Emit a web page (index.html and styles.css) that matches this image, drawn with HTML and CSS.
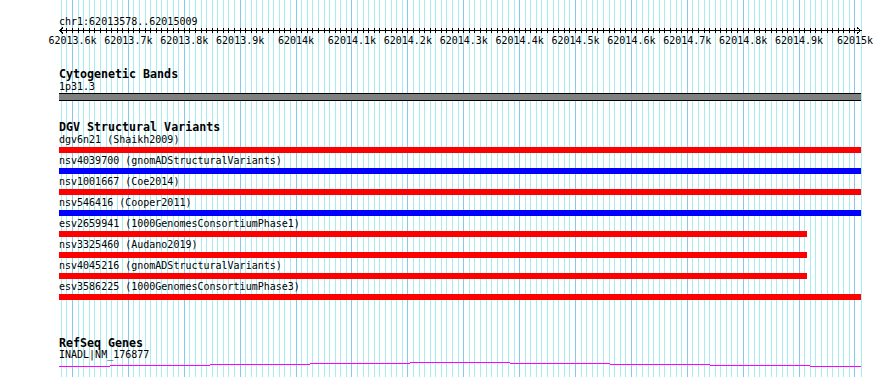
FILE: index.html
```html
<!DOCTYPE html>
<html lang="en">
<head>
  <meta charset="UTF-8" />
  <meta name="viewport" content="width=device-width, initial-scale=1.0" />
  <title>chr1:62013578..62015009</title>
  <link rel="stylesheet" href="styles.css">
</head>
<body>
  <div class="browser">
    <!-- grid lines are drawn by script.js -->
    <svg class="grid" id="grid" width="890" height="377"></svg>

    <div class="panel">
      <div class="ruler">
        <div class="locus">chr1:62013578..62015009</div>
        <svg class="axis" id="axis" width="810" height="8"></svg>
        <div class="tick-labels" id="tick-labels"></div>
      </div>

      <div class="track cyto">
        <div class="track-title">Cytogenetic Bands</div>
        <div class="label">1p31.3</div>
        <div class="band"></div>
      </div>

      <div class="track dgv">
        <div class="track-title">DGV Structural Variants</div>
        <div class="feature">
          <div class="label">dgv6n21 (Shaikh2009)</div>
          <div class="bar loss"></div>
        </div>
        <div class="feature">
          <div class="label">nsv4039700 (gnomADStructuralVariants)</div>
          <div class="bar gain"></div>
        </div>
        <div class="feature">
          <div class="label">nsv1001667 (Coe2014)</div>
          <div class="bar loss"></div>
        </div>
        <div class="feature">
          <div class="label">nsv546416 (Cooper2011)</div>
          <div class="bar gain"></div>
        </div>
        <div class="feature">
          <div class="label">esv2659941 (1000GenomesConsortiumPhase1)</div>
          <div class="bar loss" style="width: 748px"></div>
        </div>
        <div class="feature">
          <div class="label">nsv3325460 (Audano2019)</div>
          <div class="bar loss" style="width: 748px"></div>
        </div>
        <div class="feature">
          <div class="label">nsv4045216 (gnomADStructuralVariants)</div>
          <div class="bar loss" style="width: 748px"></div>
        </div>
        <div class="feature">
          <div class="label">esv3586225 (1000GenomesConsortiumPhase3)</div>
          <div class="bar loss"></div>
        </div>
      </div>

      <div class="track refseq">
        <div class="track-title">RefSeq Genes</div>
        <div class="label gene-name">INADL|NM_176877</div>
        <svg class="gene" width="802" height="10">
          <rect x="0" y="6" width="51" height="1" />
          <rect x="51" y="5" width="100" height="1" />
          <rect x="151" y="4" width="100" height="1" />
          <rect x="251" y="3" width="100" height="1" />
          <rect x="351" y="2" width="100" height="1" />
          <rect x="451" y="3" width="100" height="1" />
          <rect x="551" y="4" width="100" height="1" />
          <rect x="651" y="5" width="100" height="1" />
          <rect x="751" y="6" width="51" height="1" />
        </svg>
      </div>
    </div>
  </div>

  <script src="script.js"></script>
</body>
</html>
```

FILE: styles.css
```css
body {
  margin: 0;
  background-color: #fff;
  color: #000;
  font-family: "DejaVu Sans Mono", "Liberation Mono", monospace;
  font-size: 10px;
}
.browser {
  position: relative;
  width: 890px;
  height: 377px;
  overflow: hidden;
}
.grid {
  position: absolute;
  top: 0;
  left: 0;
}
.grid .minor { fill: #a8ecf0; }
.grid .major { fill: #88c8ec; }
.panel {
  position: relative;
  width: 802px;
  margin-left: 59px;
}
.locus {
  padding-top: 16px;
  line-height: 11px;
  height: 11px;
}
.axis {
  display: block;
  margin-left: -4px;
}
.axis path {
  fill: none;
  stroke: #000;
  stroke-width: 1;
  shape-rendering: crispEdges;
}
.tick-labels {
  position: relative;
  height: 11px;
  line-height: 11px;
}
.tick-labels span {
  position: absolute;
  top: 0;
  transform: translateX(-50%);
  white-space: nowrap;
}
.track-title {
  font-size: 11.65px;
  font-weight: bold;
  line-height: 14px;
  height: 14px;
}
.label {
  line-height: 11px;
  height: 11px;
  white-space: nowrap;
}
.cyto { margin-top: 21px; }
.band {
  height: 6px;
  margin-top: 1px;
  background-color: #808080;
  border-top: 1px solid #000;
  border-bottom: 1px solid #000;
}
.dgv { margin-top: 19px; }
.feature { padding-bottom: 2px; }
.bar {
  height: 6px;
  margin-top: 2px;
  width: 802px;
}
.bar.loss { background-color: #f00; }
.bar.gain { background-color: #00f; }
.refseq { margin-top: 34px; }
.gene-name { margin-top: -1px; }
.gene {
  display: block;
}
.gene rect { fill: #f0f; }
```

FILE: script.js
```js
const START = 62013578;
const END = 62015009;
const X0 = 60.2;
const SCALE = 0.5589;
const PANEL_LEFT = 59;
const SVG_NS = "http://www.w3.org/2000/svg";

function toX(pos) {
  return X0 + (pos - START) * SCALE;
}

function addLine(grid, x, cls) {
  const rect = document.createElementNS(SVG_NS, "rect");
  rect.setAttribute("x", x);
  rect.setAttribute("y", 0);
  rect.setAttribute("width", 1);
  rect.setAttribute("height", 377);
  rect.setAttribute("class", cls);
  grid.appendChild(rect);
}

function drawGrid() {
  const grid = document.getElementById("grid");
  for (let pos = 62013580; pos <= END; pos += 10) {
    addLine(grid, Math.floor(toX(pos)), pos % 100 === 0 ? "major" : "minor");
  }
  // right edge of the view
  addLine(grid, 861, "minor");
}

function drawAxis() {
  const axis = document.getElementById("axis");
  const off = PANEL_LEFT - 4; // svg starts 4px left of the panel
  let d = `M${59 - off} 3.5H${862 - off}`;
  d += `M${63 - off} 0.5L${59.5 - off} 3.5L${63 - off} 6.5`;
  d += `M${857 - off} 0.5L${860.5 - off} 3.5L${857 - off} 6.5`;
  for (let pos = 62013580; pos <= END; pos += 10) {
    const x = Math.floor(toX(pos)) + 0.5 - off;
    d += `M${x} 1V6`;
  }
  const path = document.createElementNS(SVG_NS, "path");
  path.setAttribute("d", d);
  axis.appendChild(path);
}

function drawTickLabels() {
  const labels = document.getElementById("tick-labels");
  for (let pos = 62013600; pos <= END; pos += 100) {
    const span = document.createElement("span");
    span.textContent = String(+(pos / 1000).toFixed(1)) + "k";
    span.style.left = (toX(pos) - PANEL_LEFT) + "px";
    labels.appendChild(span);
  }
}

drawGrid();
drawAxis();
drawTickLabels();
```
